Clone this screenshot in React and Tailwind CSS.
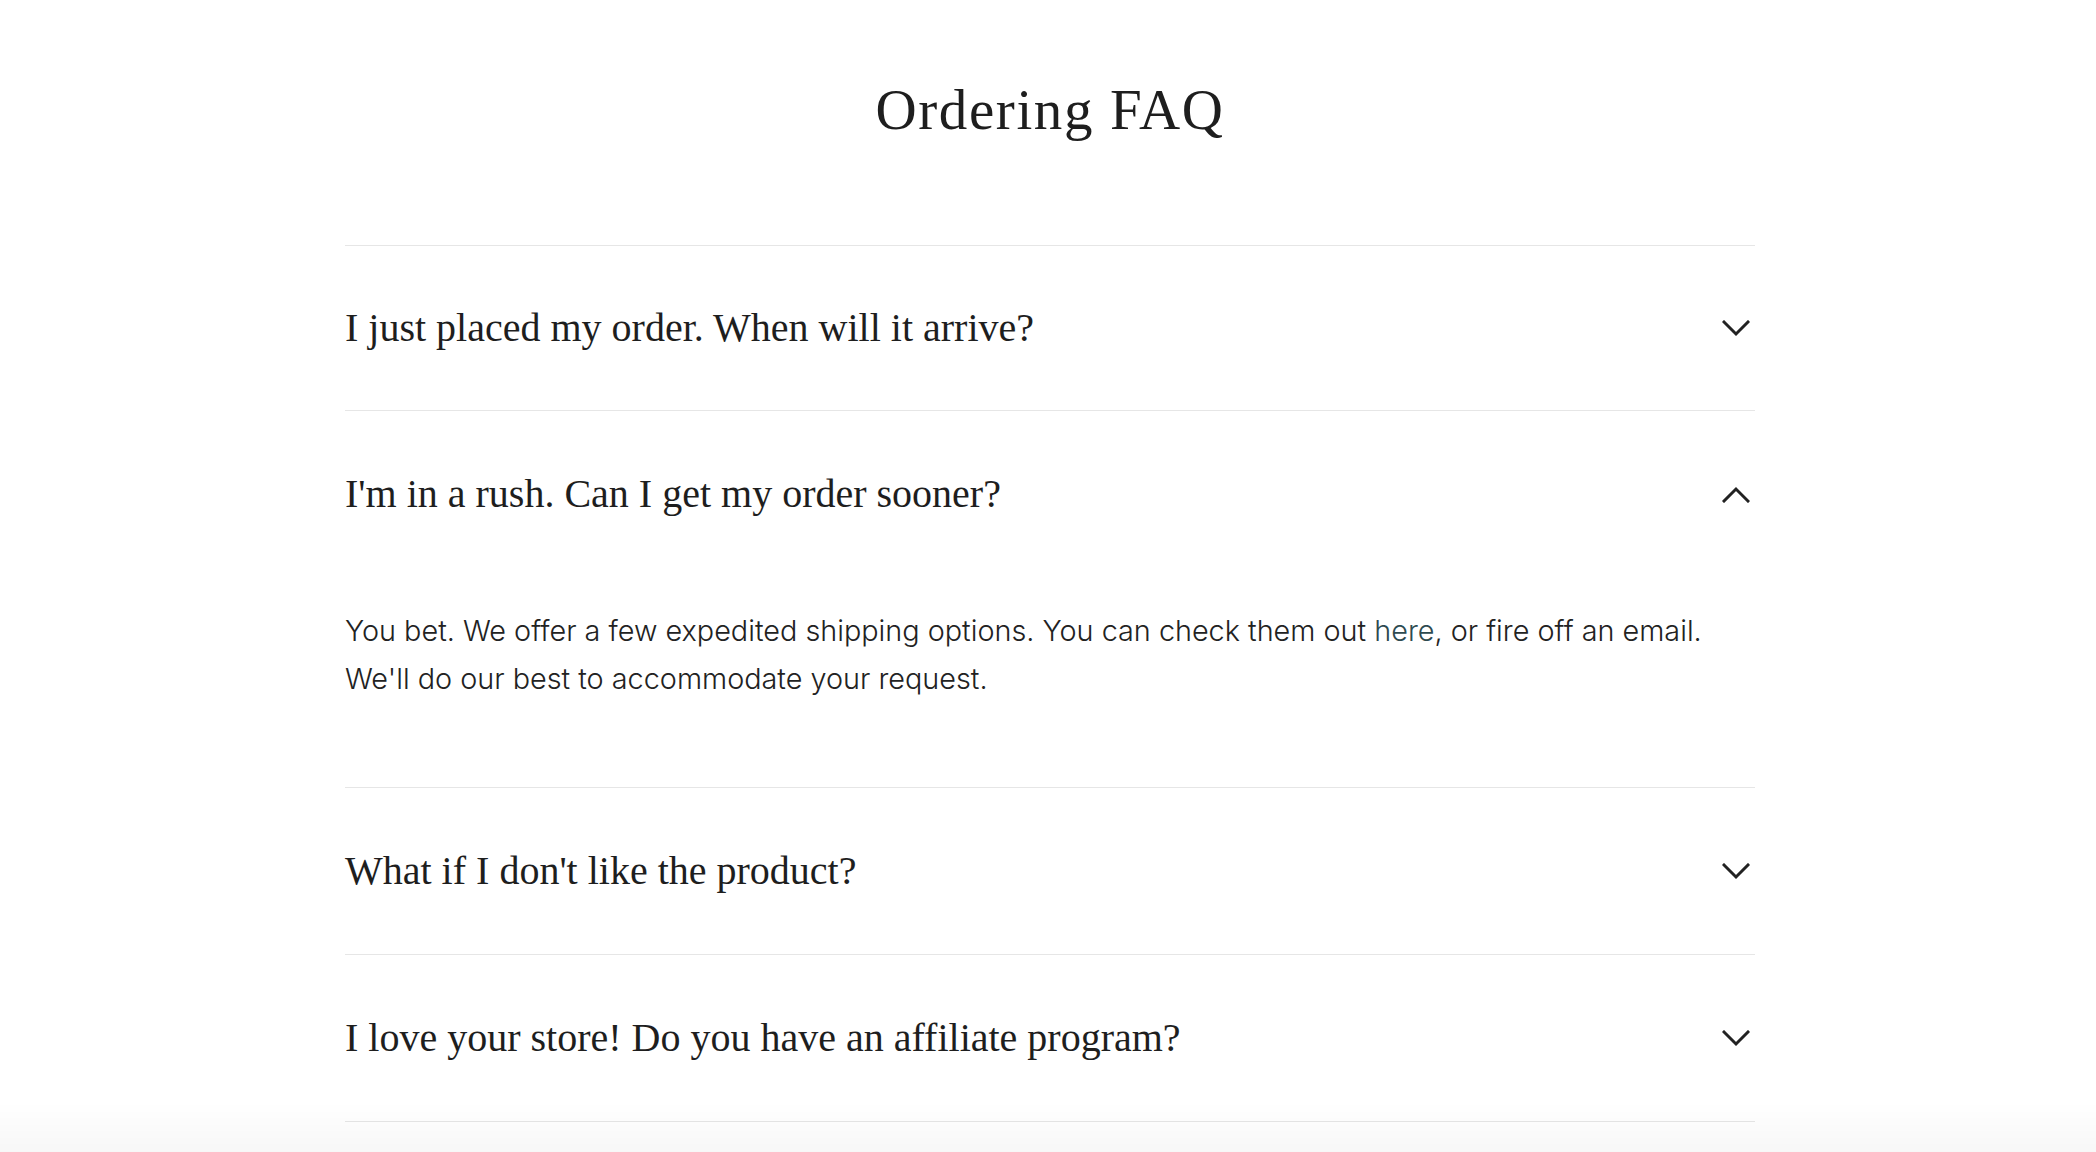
import React, { useState } from 'react';

const faqs = [
  {
    q: 'I just placed my order. When will it arrive?',
    a: null,
  },
  {
    q: "I'm in a rush. Can I get my order sooner?",
    a: (
      <>
        You bet. We offer a few expedited shipping options. You can check them out{' '}
        <a href="#" className="text-[#2d4a50]">here</a>, or fire off an email. We'll do our best to
        accommodate your request.
      </>
    ),
  },
  { q: "What if I don't like the product?", a: null },
  { q: 'I love your store! Do you have an affiliate program?', a: null },
];

const Chevron = ({ up }) => (
  <svg width="28" height="17" viewBox="0 0 28 17" fill="none" className="shrink-0">
    <polyline
      points={up ? '2,15 14,3 26,15' : '2,2 14,14 26,2'}
      stroke="#222"
      strokeWidth="3"
      strokeLinecap="square"
      fill="none"
    />
  </svg>
);

const FaqItem = ({ item, open, onToggle, first }) => (
  <div className="border-t border-[#e6e6e6]">
    <button
      onClick={onToggle}
      className={`w-full ${first ? 'h-[164px]' : 'h-[166px]'} flex items-center justify-between text-left pr-[5px]`}
    >
      <span className="font-['Liberation_Serif',serif] text-[40px] text-[#1e1e1e]">{item.q}</span>
      <Chevron up={open} />
    </button>
    {open && item.a && (
      <div className="max-w-[1380px] pt-[30px] pb-[84px] font-['Inter',sans-serif] text-[28.8px] leading-[48px] text-[#222] font-light">
        {item.a}
      </div>
    )}
  </div>
);

export default function App() {
  const [openIdx, setOpenIdx] = useState(1);

  return (
    <div className="min-h-screen bg-white pl-[4px]">
      <div className="max-w-[1410px] mx-auto">
        <h1 className="pt-[81px] mb-[107px] text-center font-['Liberation_Serif',serif] text-[57px] leading-none tracking-[1.6px] text-[#1e1e1e]">
          Ordering FAQ
        </h1>
        <div className="border-b border-[#e6e6e6]">
          {faqs.map((item, i) => (
            <FaqItem
              key={i}
              item={item}
              first={i === 0}
              open={openIdx === i}
              onToggle={() => setOpenIdx(openIdx === i ? -1 : i)}
            />
          ))}
        </div>
      </div>
      <div className="fixed bottom-0 left-0 right-0 h-[50px] pointer-events-none bg-gradient-to-b from-transparent to-black/[0.03]" />
    </div>
  );
}
